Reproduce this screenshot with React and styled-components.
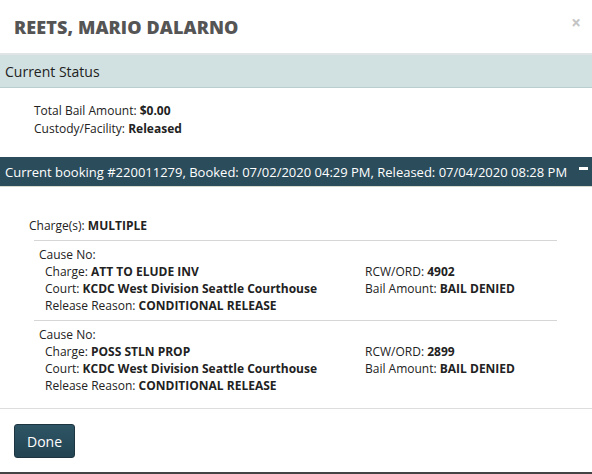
import React from 'react';
import styled, { createGlobalStyle } from 'styled-components';

const GlobalStyle = createGlobalStyle`
    body {
        margin: 0;
        background: #fff;
        font-family: "Open Sans", "Liberation Sans", sans-serif;
        color: #222;
    }
`

const Modal = styled.div`
    width: 592px;
    height: 474px;
    display: flex;
    flex-direction: column;
    border-bottom: 2px solid #444;
    box-sizing: border-box;
    overflow: hidden;
`
const Header = styled.div`
    display: flex;
    align-items: center;
    justify-content: space-between;
    height: 55px;
    padding: 0 11px 0 14px;
    border-bottom: 2px solid #dfe5e5;
    box-sizing: border-box;
`
const Title = styled.h2`
    margin: 0;
    font-size: 18px;
    font-weight: 800;
    color: #555;
    letter-spacing: 0.1px;
`
const Close = styled.span`
    color: #c4c4c4;
    font-size: 17px;
    font-weight: 700;
    margin-top: -8px;
`
const SectionBar = styled.div`
    display: flex;
    align-items: center;
    justify-content: space-between;
    flex-shrink: 0;
    height: ${p => p.dark ? '29px' : '32px'};
    padding: 0 4px 0 5px;
    font-size: ${p => p.dark ? '13px' : '14px'};
    white-space: nowrap;
    background: ${p => p.dark ? '#2b4c5b' : '#d1e1e1'};
    color: ${p => p.dark ? '#fff' : '#222'};
    border-bottom: 1px solid ${p => p.dark ? '#d8dcd0' : '#b9cfcf'};
`
const Minus = styled.span`
    flex-shrink: 0;
    width: 9px;
    height: 3px;
    background: #fff;
    margin-top: -7px;
`
const Info = styled.div`
    padding: ${p => p.pad};
    font-size: 12px;
    line-height: 17.5px;
`
const Line = styled.div`
    b { font-weight: 700; }
`
const Charges = styled.div`
    margin: 0 35px 0 34px;
`
const Charge = styled.div`
    border-top: 1px solid #d6d6d6;
    padding: 5px 0 6px 5px;
    font-size: 12px;
    line-height: 17px;
`
const ChargeGrid = styled.div`
    display: grid;
    grid-template-columns: 320px 1fr;
    padding-left: 6px;
`
const Footer = styled.div`
    margin-top: auto;
    border-top: 1px solid #ddd;
    padding: 15px 14px 14px;
    height: 64px;
    box-sizing: border-box;
`
const DoneButton = styled.button`
    font-family: "Open Sans", "Liberation Sans", sans-serif;
    font-size: 14px;
    color: #fff;
    background: linear-gradient(#2e5565, #234452);
    border: 1px solid #1c3540;
    border-radius: 3px;
    width: 61px;
    height: 34px;
    padding: 0;
`

const charges = [
    { charge: 'ATT TO ELUDE INV', rcw: '4902' },
    { charge: 'POSS STLN PROP', rcw: '2899' },
]

export default function App() {
    return (
        <>
            <GlobalStyle />
            <Modal>
                <Header>
                    <Title>REETS, MARIO DALARNO</Title>
                    <Close>×</Close>
                </Header>
                <SectionBar>Current Status</SectionBar>
                <Info pad="14px 0 20px 34px">
                    <Line>Total Bail Amount: <b>$0.00</b></Line>
                    <Line>Custody/Facility: <b>Released</b></Line>
                </Info>
                <SectionBar dark>
                    <span>Current booking #220011279, Booked: 07/02/2020 04:29 PM, Released: 07/04/2020 08:28 PM</span>
                    <Minus />
                </SectionBar>
                <Info pad="30px 0 5px 29px">
                    <Line>Charge(s): <b>MULTIPLE</b></Line>
                </Info>
                <Charges>
                    {charges.map(item => (
                        <Charge key={item.rcw}>
                            <Line>Cause No:</Line>
                            <ChargeGrid>
                                <Line>Charge: <b>{item.charge}</b></Line>
                                <Line>RCW/ORD: <b>{item.rcw}</b></Line>
                                <Line>Court: <b>KCDC West Division Seattle Courthouse</b></Line>
                                <Line>Bail Amount: <b>BAIL DENIED</b></Line>
                                <Line>Release Reason: <b>CONDITIONAL RELEASE</b></Line>
                            </ChargeGrid>
                        </Charge>
                    ))}
                </Charges>
                <Footer>
                    <DoneButton>Done</DoneButton>
                </Footer>
            </Modal>
        </>
    );
}
